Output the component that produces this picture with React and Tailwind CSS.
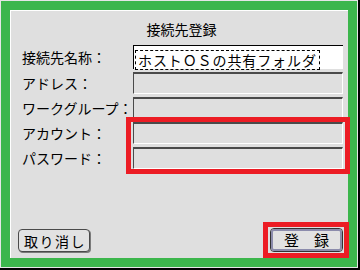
const fields = [
  { label: '接続先名称：', value: 'ホストＯＳの共有フォルダ', active: true },
  { label: 'アドレス：' },
  { label: 'ワークグループ：' },
  { label: 'アカウント：' },
  { label: 'パスワード：' },
]

const Field = ({ value, active }) => {
  if (active) {
    return (
      <div className="w-[210px] h-[24px] bg-white border-t border-l border-black pl-[1px] pt-[1px]">
        <span className="inline-block h-[20px] leading-[18px] border border-dashed border-black pl-[2px] pr-[2px] text-[14px] tracking-[0.9px] whitespace-nowrap">
          {value}
        </span>
      </div>
    )
  }
  return (
    <div className="w-[210px] h-[22px] bg-[#dfdfdf] border-t-2 border-l border-t-[#4a4a4a] border-l-[#4a4a4a] border-r border-b border-r-white border-b-white" />
  )
}

const App = () => {
  return (
    <div
      className="relative w-[360px] h-[270px] bg-black pr-[2px] pb-[2px] text-black"
      style={{ fontFamily: '"Noto Sans CJK JP", "Noto Sans", sans-serif' }}
    >
      <div className="h-full border border-[#e6e6e6]">
        <div className="h-full border-[9px] border-[#3cb64c]">
          <div className="h-full flex flex-col border-t border-l border-white bg-[#dfdfdf]">
            <div className="pt-[8px] pl-[4px] text-center text-[14px] leading-[20px]">接続先登録</div>

            <div className="mt-[6px] pl-[11px] pr-[5px] flex flex-col gap-[3px]">
              {fields.map((f) => (
                <div key={f.label} className="flex items-center">
                  <div className="w-[111px] text-[14px] leading-[20px] whitespace-nowrap">{f.label}</div>
                  <Field value={f.value} active={f.active} />
                </div>
              ))}
            </div>

            <div className="mt-auto pl-[7px] pr-[5px] pb-[6px] flex justify-between items-end">
              <button className="w-[72px] h-[23px] rounded-[4px] border border-[#4a4a4a] bg-[#e2e2e2] shadow-[1px_1px_0_#7a7a7a] text-[14px] leading-[20px] tracking-[1.5px] pl-[2px]">
                取り消し
              </button>
              <button className="w-[73px] h-[24px] rounded-[4px] border border-[#333] bg-[#e2e2e2] p-0">
                <div className="h-full rounded-[3px] border-2 border-[#8c8cac] text-[15px] leading-[18px]">
                  登　録
                </div>
              </button>
            </div>
          </div>
        </div>
      </div>

      <div className="absolute left-[126px] top-[117px] w-[224px] h-[57px] border-[5px] border-[#ec1c24]" />
      <div className="absolute left-[263px] top-[222px] w-[86px] h-[36px] border-[5px] border-[#ec1c24]" />
    </div>
  )
}

export default App
